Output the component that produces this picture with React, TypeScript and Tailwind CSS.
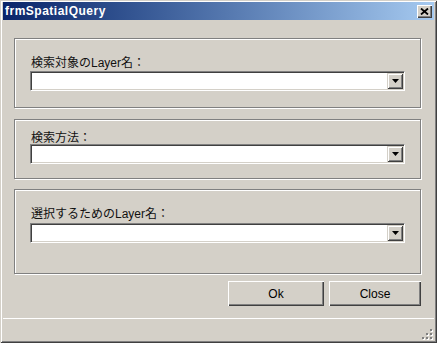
import React from "react";

const labelFont = { fontFamily: '"Liberation Sans", "Noto Sans CJK JP", sans-serif' };

function ComboBox() {
  return (
    <div className="flex h-[20px] w-full border border-t-[#808080] border-l-[#808080] border-b-white border-r-white bg-white shadow-[inset_1px_1px_0_#404040,inset_-1px_-1px_0_#d4d0c8] p-[1px]">
      <div className="flex-1" />
      <div className="flex h-full w-[16px] items-center justify-center bg-[#d4d0c8] shadow-[inset_1px_1px_0_#d4d0c8,inset_-1px_-1px_0_#404040,inset_2px_2px_0_#fff,inset_-2px_-2px_0_#808080]">
        <svg width="7" height="4" viewBox="0 0 7 4">
          <path d="M0 0h7L3.5 4z" fill="#000" />
        </svg>
      </div>
    </div>
  );
}

function Group({
  label,
  height,
  padTop,
  gap,
}: {
  label: string;
  height: string;
  padTop: string;
  gap: string;
}) {
  return (
    <div
      className={`flex flex-col border border-[#808080] shadow-[inset_1px_1px_0_#fff,1px_1px_0_#fff] pl-[15px] pr-[15px] ${height} ${padTop}`}
    >
      <div className="text-[12px] leading-[12px] text-[#111] pl-[1px]" style={labelFont}>
        {label}
      </div>
      <div className={gap}>
        <ComboBox />
      </div>
    </div>
  );
}

function Button({ text, width }: { text: string; width: string }) {
  return (
    <button
      className={`${width} h-[25px] bg-[#d4d0c8] text-[12px] text-black shadow-[inset_1px_1px_0_#fff,inset_-1px_-1px_0_#404040,inset_-2px_-2px_0_#808080]`}
      style={{ fontFamily: '"Liberation Sans", Arial, sans-serif' }}
    >
      {text}
    </button>
  );
}

function SizeGrip() {
  const dots: [number, number][] = [
    [2, 0],
    [1, 1],
    [2, 1],
    [0, 2],
    [1, 2],
    [2, 2],
  ];
  return (
    <svg width="12" height="12" viewBox="0 0 12 12">
      {dots.map(([c, r], i) => (
        <g key={i}>
          <rect x={c * 4 + 1} y={r * 4 + 1} width="2" height="2" fill="#fff" />
          <rect x={c * 4} y={r * 4} width="2" height="2" fill="#808080" />
        </g>
      ))}
    </svg>
  );
}

export default function App() {
  return (
    <div className="flex h-[343px] w-[437px] flex-col bg-[#d4d0c8] px-[3px] pt-[2px] pb-[2px] shadow-[inset_1px_1px_0_#d4d0c8,inset_-1px_-1px_0_#404040,inset_2px_2px_0_#fff,inset_-2px_-2px_0_#808080]">
      <div className="flex h-[18px] items-center bg-gradient-to-r from-[#0a246a] to-[#a6caf0] pl-[2px] pr-[2px]">
        <span
          className="flex-1 text-[12px] font-bold text-white tracking-[0.5px]"
          style={{ fontFamily: '"Liberation Sans", Tahoma, sans-serif' }}
        >
          frmSpatialQuery
        </span>
        <div className="flex h-[13px] w-[15px] items-center justify-center bg-[#d4d0c8] shadow-[inset_1px_1px_0_#fff,inset_-1px_-1px_0_#404040,inset_-2px_-2px_0_#808080]">
          <svg width="9" height="7" viewBox="0 0 9 7">
            <path d="M1 0.5L8 6.5M8 0.5L1 6.5" stroke="#000" strokeWidth="1.8" />
          </svg>
        </div>
      </div>

      <div className="flex flex-col pl-[11px] pr-[13px] pt-[18px]">
        <Group label="検索対象のLayer名：" height="h-[70px]" padTop="pt-[18px]" gap="mt-[2px]" />
        <div className="mt-[11px]">
          <Group label="検索方法：" height="h-[60px]" padTop="pt-[12px]" gap="mt-0" />
        </div>
        <div className="mt-[10px]">
          <Group label="選択するためのLayer名：" height="h-[85px]" padTop="pt-[18px]" gap="mt-[3px]" />
        </div>
        <div className="mt-[7px] flex justify-end gap-[5px]">
          <Button text="Ok" width="w-[96px]" />
          <Button text="Close" width="w-[92px]" />
        </div>
      </div>

      <div className="mt-auto flex h-[23px] items-end justify-end border-t border-white">
        <SizeGrip />
      </div>
    </div>
  );
}
